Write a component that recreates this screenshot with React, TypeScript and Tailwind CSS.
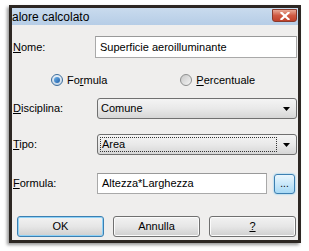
const font = { fontFamily: '"Liberation Sans", Arial, sans-serif' };

function Arrow() {
  return (
    <svg width="7" height="4" viewBox="0 0 7 4" className="shrink-0">
      <path d="M0 0h7L3.5 4z" fill="#000" />
    </svg>
  );
}

function Select({ value, focused }: { value: string; focused?: boolean }) {
  return (
    <div className="flex h-[21px] flex-1 items-center rounded-[3px] border border-[#707070] bg-gradient-to-b from-[#f4f4f4] via-[#e9e9e9] to-[#d6d6d6] pl-[2px] pr-[4px]">
      <div
        className={`flex h-[15px] flex-1 items-center pl-[1px] ${
          focused ? "border border-dotted border-[#333]" : ""
        }`}
      >
        {value}
      </div>
      <div className="ml-[3px] flex h-full w-[12px] items-center justify-center">
        <Arrow />
      </div>
    </div>
  );
}

function Btn({
  children,
  primary,
  w,
}: {
  children: React.ReactNode;
  primary?: boolean;
  w: string;
}) {
  return (
    <div
      className={`${w} flex h-[21px] items-center justify-center rounded-[3px] border bg-gradient-to-b from-[#f2f2f2] via-[#e6e6e6] to-[#cfcfcf] ${
        primary
          ? "border-[#3c7fb1] shadow-[inset_0_0_0_1px_#8fd2f7]"
          : "border-[#707070] shadow-[inset_0_0_0_1px_#fbfbfb]"
      }`}
    >
      {children}
    </div>
  );
}

export default function App() {
  return (
    <div
      className="h-[251px] w-[309px] overflow-hidden bg-white pt-[5px] pl-[9px] text-[11px] text-black"
      style={font}
    >
      <div className="flex h-[238px] w-[292px] flex-col border-[3px] border-[#2d2723] bg-[#efeeed] shadow-[-2px_2px_3px_#9a9a9a]">
        {/* title bar */}
        <div className="flex h-[17px] shrink-0 items-center bg-gradient-to-b from-[#c9dbee] to-[#b6cde6] pr-[1px]">
          <div className="flex-1 whitespace-nowrap text-[12px] leading-none">
            alore calcolato
          </div>
          <div className="mt-[-2px] flex h-[13px] w-[25px] items-center justify-center rounded-b-[3px] border border-[#8a3a2c] bg-gradient-to-b from-[#e7a795] via-[#cf5a43] to-[#c0412a]">
            <svg width="10" height="8" viewBox="0 0 10 8">
              <path
                d="M1.5 0.8L8.5 7.2M8.5 0.8L1.5 7.2"
                stroke="#fff"
                strokeWidth="2.2"
                strokeLinecap="square"
              />
            </svg>
          </div>
        </div>

        {/* body */}
        <div className="flex flex-col pr-[1px]">
          <div className="mt-[11px] flex h-[22px] items-center">
            <span className="w-[83px] pl-[1px]">
              <u>N</u>ome:
            </span>
            <div className="flex h-full flex-1 items-center border border-[#a9a9a9] border-t-[#999] bg-white pl-[4px]">
              Superficie aeroilluminante
            </div>
          </div>

          <div className="mt-[16px] flex h-[12px] items-center">
            <div className="ml-[39px] flex items-center gap-[4px]">
              <span className="flex h-[12px] w-[12px] items-center justify-center rounded-full border border-[#3d6d9c] bg-gradient-to-b from-[#e8f0f8] to-[#c6d6e6]">
                <span className="h-[6px] w-[6px] rounded-full bg-gradient-to-br from-[#6fb3ea] to-[#1d5ea8]" />
              </span>
              <span>
                Fo<u>r</u>mula
              </span>
            </div>
            <div className="ml-[73px] flex items-center gap-[4px]">
              <span className="h-[12px] w-[12px] rounded-full border border-[#8e8f8f] bg-gradient-to-br from-[#c8c8c8] to-[#f4f4f4]" />
              <span>
                <u>P</u>ercentuale
              </span>
            </div>
          </div>

          <div className="mt-[12px] flex h-[21px] items-center">
            <span className="w-[85px] pl-[1px]">
              <u>D</u>isciplina:
            </span>
            <Select value="Comune" />
          </div>

          <div className="mt-[15px] flex h-[21px] items-center">
            <span className="w-[85px] pl-[1px]">
              <u>T</u>ipo:
            </span>
            <Select value="Area" focused />
          </div>

          <div className="mt-[18px] flex h-[21px] items-center">
            <span className="w-[85px] pl-[1px]">
              <u>F</u>ormula:
            </span>
            <div className="flex h-full w-[170px] items-center border border-[#a9a9a9] border-t-[#999] bg-white pl-[4px]">
              Altezza*Larghezza
            </div>
            <div className="ml-[7px] flex h-[20px] w-[21px] items-end justify-center rounded-[3px] border border-[#3c7fb1] bg-gradient-to-b from-[#eaf6fd] to-[#a7d9f5] pb-[4px] text-[10px] leading-none shadow-[0_0_2px_#5fc2f5]">
              ...
            </div>
          </div>

          <div className="mt-[22px] flex h-[21px] items-center">
            <div className="ml-[5px]">
              <Btn w="w-[87px]" primary>
                OK
              </Btn>
            </div>
            <div className="ml-[9px]">
              <Btn w="w-[87px]">Annulla</Btn>
            </div>
            <div className="ml-[9px]">
              <Btn w="w-[87px]">
                <u>?</u>
              </Btn>
            </div>
          </div>
        </div>
      </div>
    </div>
  );
}
